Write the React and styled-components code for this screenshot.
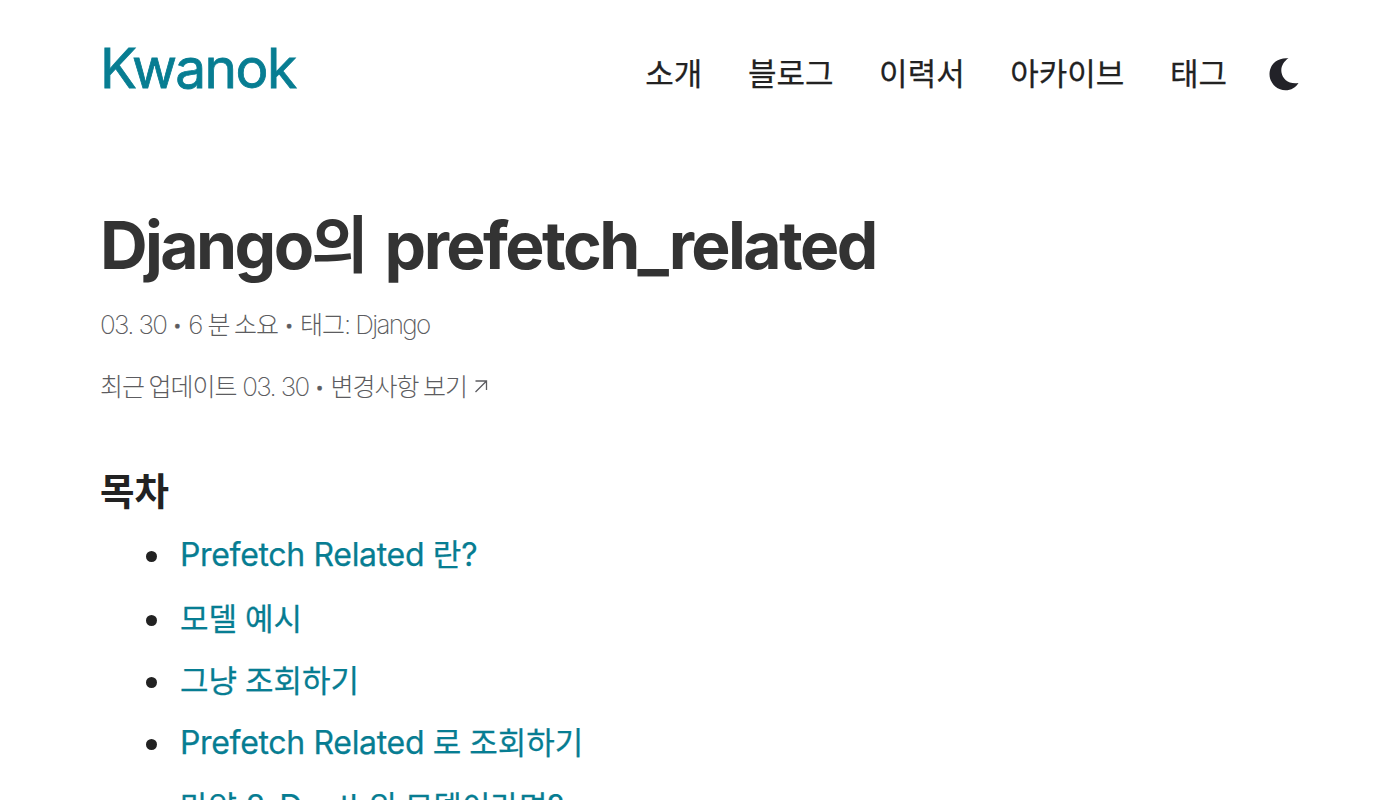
import React from "react";
import styled, { createGlobalStyle } from "styled-components";

const GlobalStyle = createGlobalStyle`
  * { box-sizing: border-box; }
  html, body { margin: 0; height: 800px; overflow: hidden; background: #fff; }
  body {
    font-family: Inter, "Noto Sans CJK KR", sans-serif;
    color: #222222;
    font-kerning: normal;
  }
  a { color: inherit; text-decoration: none; }
`;

const Page = styled.div`
  height: 800px;
  overflow: hidden;
  padding: 33px 100px 0;
`;

const Header = styled.header`
  display: flex;
  justify-content: space-between;
  align-items: flex-start;
  height: 80px;
`;

const Logo = styled.a`
  && { color: #077d92; }
  font-size: 55px;
  font-weight: 400;
  line-height: 70px;
  letter-spacing: -1.6px;
  -webkit-text-stroke: 0.8px currentColor;
`;

const Nav = styled.nav`
  display: flex;
  align-items: flex-start;
  gap: 45.6px;
  padding-top: 4px;
`;

const NavLink = styled.a`
  font-family: "Noto Sans CJK KR", sans-serif;
  font-size: 31px;
  line-height: 70px;
  -webkit-text-stroke: 0.25px currentColor;
`;

const ThemeButton = styled.button`
  border: 0;
  padding: 0;
  background: none;
  width: 32px;
  height: 34px;
  margin: 20px 0 0 -4.6px;
  svg { display: block; }
`;

const Ko = styled.span`
  font-family: "Noto Sans CJK KR", sans-serif;
  font-size: ${(p) => p.$size}px;
  letter-spacing: ${(p) => p.$track || 0}px;
  line-height: 0;
`;

const Title = styled.h1`
  margin: 92px 0 0;
  color: #333333;
  font-size: 66px;
  font-weight: 700;
  line-height: 80px;
  letter-spacing: -2.6px;
  word-spacing: 3px;
  white-space: nowrap;
  ${Ko} { vertical-align: 1px; }
`;

const Meta = styled.p`
  margin: ${(p) => p.$top}px 0 0;
  color: #5c5c60;
  font-size: 26px;
  font-weight: 200;
  line-height: 40px;
  letter-spacing: -1.65px;
  white-space: nowrap;
  svg { margin-left: 7px; }
`;

const Dot = styled.span`
  display: inline-block;
  width: 22px;
  font-size: 19px;
  line-height: 20px;
  letter-spacing: 0;
  text-align: center;
  vertical-align: 2px;
  -webkit-text-stroke: 0.3px currentColor;
`;

const TocTitle = styled.h2`
  margin: 60px 0 0;
  font-size: 37.5px;
  font-weight: 700;
  line-height: 50px;
`;

const Toc = styled.ul`
  list-style: none;
  margin: 13px 0 0;
  padding: 0;
`;

const TocItem = styled.li`
  display: flex;
  align-items: center;
  height: 50px;
  margin-bottom: ${(p) => p.$gap || 12}px;
  padding-left: 46px;
  font-size: 32px;
  line-height: 50px;
  letter-spacing: -0.33px;
  white-space: nowrap;
  color: #077d92;
  -webkit-text-stroke: 0.25px currentColor;
  ${Ko} { word-spacing: 1px; }
  &::before {
    content: "";
    width: 11px;
    height: 11px;
    margin: 3px 23px 0 0;
    border-radius: 50%;
    background: #222222;
  }
`;

const links = ["소개", "블로그", "이력서", "아카이브", "태그"];

export default function App() {
  return (
    <>
      <GlobalStyle />
      <Page>
        <Header>
          <Logo>Kwanok</Logo>
          <Nav>
            {links.map((l) => <NavLink key={l}>{l}</NavLink>)}
            <ThemeButton aria-label="theme">
              <svg width="32" height="34" viewBox="0 0 32 34">
                <path d="M20.500 1.300C15.500 4.500 12.500 10 13.500 15.500C14.700 22.500 21 27.500 30.500 26C28 30.500 23 33.300 17.500 33.300C8.500 33.300 1.500 26 1.500 17C1.500 7.500 9.500 0 20.500 1.300Z" fill="#222228" />
              </svg>
            </ThemeButton>
          </Nav>
        </Header>
        <Title>Django<Ko $size={62}>의</Ko> prefetch_related</Title>
        <Meta $top={20}>
          03. 30<Dot>•</Dot>6 <Ko $size={25} $track={-1}>분 소요</Ko><Dot>•</Dot><Ko $size={25} $track={-1}>태그</Ko>: Django
        </Meta>
        <Meta $top={22}>
          <Ko $size={25} $track={-1}>최근 업데이트</Ko> 03. 30<Dot>•</Dot><Ko $size={25} $track={-1}>변경사항 보기</Ko>
          <svg width="14" height="16" viewBox="0 0 14 16" fill="none" stroke="#5c5c60" strokeWidth="1.3">
            <path d="M1.500 12L12.500 1M1.500 1H12.500V10" />
          </svg>
        </Meta>
        <TocTitle><Ko $size={37.5}>목차</Ko></TocTitle>
        <Toc>
          <TocItem $gap={14}><a>Prefetch Related <Ko $size={31}>란</Ko>?</a></TocItem>
          <TocItem><a><Ko $size={31}>모델 예시</Ko></a></TocItem>
          <TocItem><a><Ko $size={31}>그냥 조회하기</Ko></a></TocItem>
          <TocItem $gap={14}><a>Prefetch Related <Ko $size={31}>로 조회하기</Ko></a></TocItem>
          <TocItem><a><Ko $size={31}>만약</Ko> 2-Depth<Ko $size={31}>의 모델이라면</Ko>?</a></TocItem>
        </Toc>
      </Page>
    </>
  );
}
